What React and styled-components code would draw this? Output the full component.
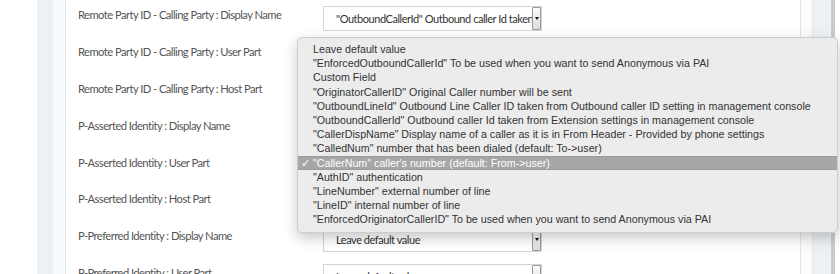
import React from 'react';
import styled, {createGlobalStyle} from 'styled-components';

const GlobalStyle = createGlobalStyle`
    html, body {
        margin: 0;
        padding: 0;
        background: #ffffff;
        overflow: hidden;
    }
`;

const Page = styled.div`
    position: relative;
    display: flex;
    width: 840px;
    height: 274px;
    overflow: hidden;
    background: #ffffff;
`;

const Strip = styled.div`
    flex: 0 0 ${p => p.w}px;
    background: ${p => p.bg};
    border-right: ${p => (p.line ? '1px solid #e4e7ea' : 'none')};
    box-sizing: border-box;
`;

const Card = styled.div`
    flex: 1;
    min-width: 0;
    border-left: 1px solid #e3e6e9;
    border-right: 1px solid #e3e6e9;
    background: #ffffff;
    padding-left: 12px;
`;

const Row = styled.div`
    display: flex;
    align-items: flex-start;
    height: 36.9px;
`;

const Label = styled.div`
    width: 245px;
    flex-shrink: 0;
    padding-top: 6px;
    font-family: Lato, "Open Sans", sans-serif;
    font-size: 11.2px;
    letter-spacing: -0.55px;
    line-height: 17px;
    color: #555555;
    white-space: nowrap;
`;

const Select = styled.div`
    margin-top: 6px;
    width: 219px;
    flex-shrink: 0;
    height: 25px;
    box-sizing: border-box;
    display: flex;
    align-items: stretch;
    border: 1px solid #d4d4d4;
    background: #ffffff;
`;

const SelectText = styled.div`
    flex: 1;
    min-width: 0;
    overflow: hidden;
    white-space: nowrap;
    padding-left: 12px;
    font-family: Lato, "Open Sans", sans-serif;
    font-size: 11px;
    letter-spacing: -0.45px;
    line-height: 23px;
    color: #333333;
`;

const ArrowBtn = styled.div`
    flex: 0 0 7px;
    border: 1px solid #9a9a9a;
    border-radius: 1px;
    background: linear-gradient(#fbfbfb, #dedede);
    display: flex;
    align-items: center;
    justify-content: center;
    &:after {
        content: "";
        border-left: 2.5px solid transparent;
        border-right: 2.5px solid transparent;
        border-top: 3px solid #111;
    }
`;

const Popup = styled.ul`
    position: absolute;
    left: 297px;
    top: 37px;
    width: 541px;
    margin: 0;
    padding: 4px 0 6px;
    list-style: none;
    box-sizing: border-box;
    background: #ececec;
    border: 1px solid #cdcdcd;
    border-radius: 5px;
    box-shadow: 0 5px 14px rgba(0, 0, 0, 0.22);
    z-index: 5;
`;

const Item = styled.li`
    position: relative;
    height: 14.2px;
    line-height: 14.2px;
    padding-left: 15px;
    font-family: "Liberation Sans", Arial, sans-serif;
    font-size: 10.7px;
    white-space: nowrap;
    color: ${p => (p.active ? '#ffffff' : '#333333')};
    background: ${p => (p.active ? '#a6a6a6' : 'transparent')};
    box-shadow: ${p => (p.active ? 'inset 0 1px 0 #9a9a9a, inset 0 -1px 0 #9a9a9a' : 'none')};
`;

const Check = styled.span`
    position: absolute;
    left: 3px;
    top: 0;
`;

const labels = [
    ['Remote Party ID - Calling Party : Display Name', '"OutboundCallerId" Outbound caller Id taken from Extension settings'],
    ['Remote Party ID - Calling Party : User Part', 'Leave default value'],
    ['Remote Party ID - Calling Party : Host Part', 'Leave default value'],
    ['P-Asserted Identity : Display Name', 'Leave default value'],
    ['P-Asserted Identity : User Part', 'Leave default value'],
    ['P-Asserted Identity : Host Part', 'Leave default value'],
    ['P-Preferred Identity : Display Name', 'Leave default value'],
    ['P-Preferred Identity : User Part', 'Leave default value'],
];

const options = [
    'Leave default value',
    '"EnforcedOutboundCallerId" To be used when you want to send Anonymous via PAI',
    'Custom Field',
    '"OriginatorCallerID" Original Caller number will be sent',
    '"OutboundLineId" Outbound Line Caller ID taken from Outbound caller ID setting in management console',
    '"OutboundCallerId" Outbound caller Id taken from Extension settings in management console',
    '"CallerDispName" Display name of a caller as it is in From Header - Provided by phone settings',
    '"CalledNum" number that has been dialed (default: To->user)',
    '"CallerNum" caller\'s number (default: From->user)',
    '"AuthID" authentication',
    '"LineNumber" external number of line',
    '"LineID" internal number of line',
    '"EnforcedOriginatorCallerID" To be used when you want to send Anonymous via PAI',
];

const App = () => {
    return (
        <Page>
            <GlobalStyle/>
            <Strip w={37} bg="#ffffff"/>
            <Strip w={16} bg="#eef1f4"/>
            <Strip w={12} bg="#f8f9fa"/>
            <Card>
                {labels.map(([label, value]) => (
                    <Row key={label}>
                        <Label>{label}</Label>
                        <Select>
                            <SelectText>{value}</SelectText>
                            <ArrowBtn/>
                        </Select>
                    </Row>
                ))}
            </Card>
            <Strip w={12} bg="#fbfbfc" line/>
            <Strip w={18} bg="#eef1f4"/>
            <Strip w={4} bg="#c9cbcd"/>
            <Strip w={5} bg="#ffffff"/>
            <Popup>
                {options.map((opt, i) => (
                    <Item key={opt} active={i === 8}>
                        {i === 8 && <Check>✓</Check>}
                        {opt}
                    </Item>
                ))}
            </Popup>
        </Page>
    );
};

export default App;
